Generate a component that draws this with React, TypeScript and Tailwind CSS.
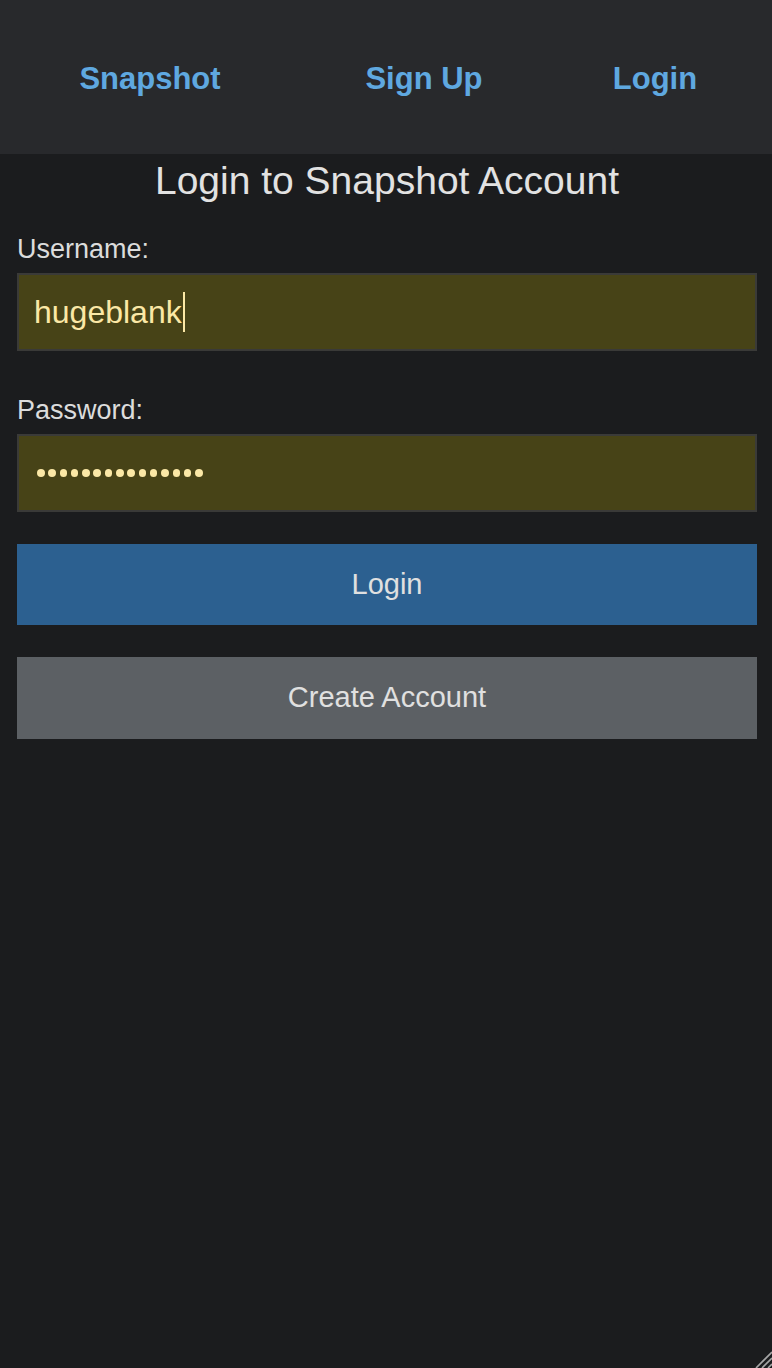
const font = { fontFamily: '"Liberation Sans", Arial, sans-serif' };

function Field({ label, children }: { label: string; children: React.ReactNode }) {
  return (
    <div className="flex flex-col">
      <label className="text-[27px] leading-[30px] text-[#dcdcdc]">{label}</label>
      <div className="mt-[9px] flex h-[78px] items-center border-2 border-[#3a3a38] bg-[#474317] pl-[15px]">
        {children}
      </div>
    </div>
  );
}

export default function App() {
  return (
    <div style={font} className="relative flex min-h-[1368px] flex-col bg-[#1b1c1e]">
      <header className="flex h-[154px] items-center bg-[#28292c] pt-[4px] text-[31px] font-bold text-[#5fa8e0]">
        <div className="flex w-[300px] justify-center">Snapshot</div>
        <div className="flex w-[248px] justify-center">Sign Up</div>
        <div className="flex w-[214px] justify-center">Login</div>
      </header>

      <main className="flex flex-col pl-[17px] pr-[15px]">
        <h1 className="mt-[5px] text-center text-[39px] leading-[44px] text-[#e2e2e2]">
          Login to Snapshot Account
        </h1>

        <div className="mt-[31px]">
          <Field label="Username:">
            <span className="text-[32px] text-[#fbe8a6]">hugeblank</span>
            <span className="ml-[1px] h-[40px] w-[2px] bg-[#fbe8a6]" />
          </Field>
        </div>

        <div className="mt-[44px]">
          <Field label="Password:">
            <div className="flex gap-[3.8px] pl-[3px]">
              {Array.from({ length: 15 }).map((_, i) => (
                <span key={i} className="h-[7.5px] w-[7.5px] rounded-full bg-[#fbe8a6]" />
              ))}
            </div>
          </Field>
        </div>

        <button className="mt-[32px] flex h-[81px] items-center justify-center bg-[#2c6090] text-[29px] text-[#e0e0e0]">
          Login
        </button>
        <button className="mt-[32px] flex h-[82px] items-center justify-center bg-[#5c6064] text-[29px] text-[#e0e0e0]">
          Create Account
        </button>
      </main>

      <svg className="absolute bottom-0 right-0" width="20" height="20" viewBox="0 0 20 20">
        <path d="M20 4 L4 20 M20 10 L10 20 M20 16 L16 20" stroke="#a6a6a6" strokeWidth="1.6" />
      </svg>
    </div>
  );
}
